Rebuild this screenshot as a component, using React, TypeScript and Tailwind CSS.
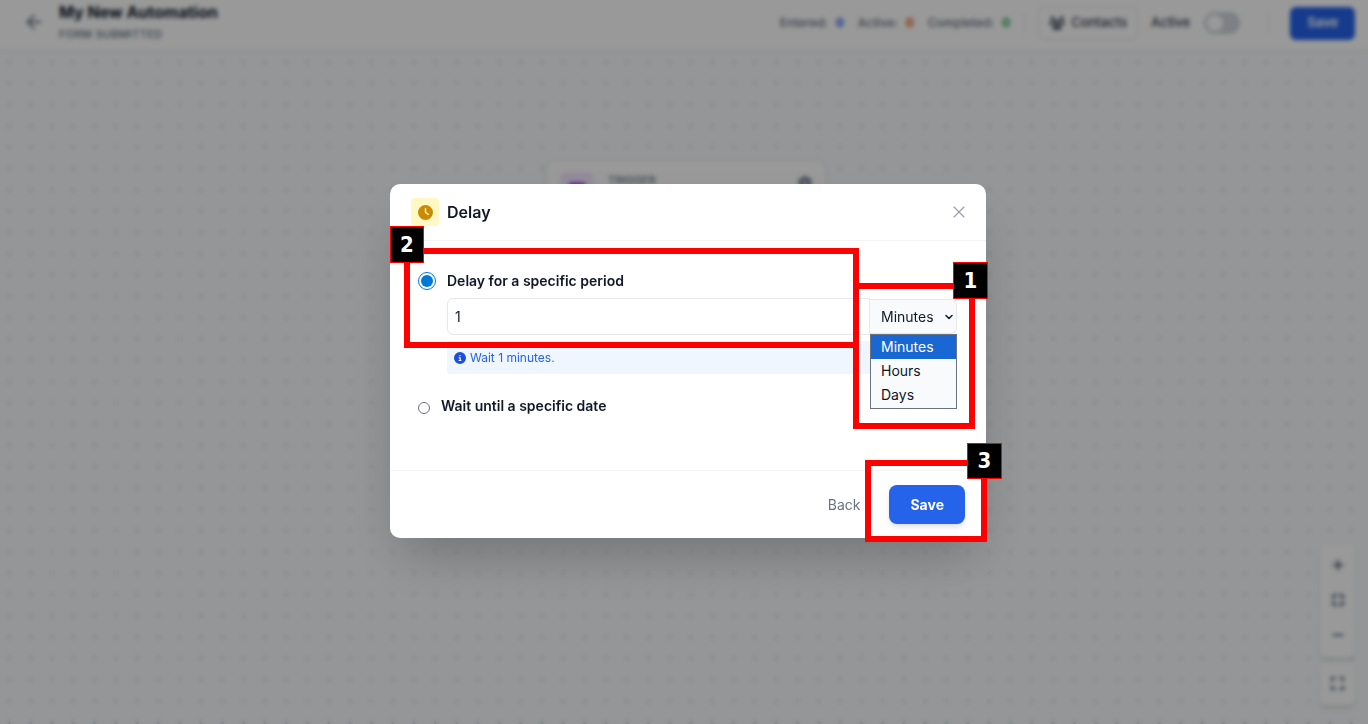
import { useState } from "react";
import type { ReactNode } from "react";
import { ArrowLeft, ChevronDown, X } from "lucide-react";
import { FaCircleInfo, FaClock, FaCompress, FaExpand, FaGear, FaMinus, FaPlus, FaRectangleList, FaUsers } from "react-icons/fa6";
import clsx from "clsx";

const UNITS = ["Minutes", "Hours", "Days"];

const STATS = [
  { label: "Entered:", value: 0, color: "text-[#2563eb]" },
  { label: "Active:", value: 0, color: "text-[#ea580c]" },
  { label: "Completed:", value: 0, color: "text-[#16a34a]" },
];

function Callout({ step, box, badge }: { step: number; box: string; badge: string }) {
  return (
    <>
      <div className={clsx("pointer-events-none absolute border-6 border-[#ff0000]", box)} />
      <span
        className={clsx(
          "pointer-events-none absolute z-10 flex items-center justify-center border border-[#ff0000] bg-black font-['DejaVu_Sans_Condensed','DejaVu_Sans',sans-serif] text-[22px] leading-8 font-bold text-white",
          badge,
        )}
      >
        {step}
      </span>
    </>
  );
}

function MapButton({ label, children }: { label: string; children: ReactNode }) {
  return (
    <button type="button" aria-label={label} className="flex h-[35px] w-[35px] items-center justify-center text-slate-600">
      {children}
    </button>
  );
}

function Header() {
  return (
    <header className="flex h-[51px] shrink-0 items-center justify-between border-b border-gray-200 bg-white pr-[13px] pl-[23px]">
      <div className="flex items-center gap-3.5 pb-1.5">
        <button type="button" aria-label="Back to automations" className="text-gray-500">
          <ArrowLeft size={22} />
        </button>
        <div>
          <h1 className="text-base leading-6 font-bold text-gray-900">My New Automation</h1>
          <p className="text-[11px] leading-5 font-medium tracking-wide text-gray-500 uppercase">Form submitted</p>
        </div>
      </div>
      <div className="flex items-center pb-1 text-[13px]">
        <dl className="flex gap-3.5 text-xs font-medium text-gray-500">
          {STATS.map((s) => (
            <div key={s.label} className="flex gap-2">
              <dt>{s.label}</dt>
              <dd className={clsx("font-bold", s.color)}>{s.value}</dd>
            </div>
          ))}
        </dl>
        <div className="mr-[13px] ml-3.5 h-5 w-px bg-gray-200" />
        <button type="button" className="flex h-[34px] items-center gap-1.5 rounded-md border border-gray-200 px-2.5 font-medium text-gray-700">
          <FaUsers size={16} />
          Contacts
        </button>
        <label className="ml-[13px] flex items-center gap-3.5 font-medium text-gray-700">
          Active
          <input
            type="checkbox"
            role="switch"
            className="h-[22px] w-9 appearance-none rounded-full bg-gray-300 p-[3px] before:block before:h-4 before:w-4 before:rounded-full before:bg-white"
          />
        </label>
        <div className="mx-[21px] ml-7 h-5 w-px bg-gray-200" />
        <button type="button" className="h-[33px] rounded-md bg-[#2563eb] px-[17px] font-semibold text-white">
          Save
        </button>
      </div>
    </header>
  );
}

function Canvas() {
  return (
    <main className="relative flex-1 bg-slate-50">
      <svg className="absolute inset-0 h-full w-full" aria-hidden="true">
        <defs>
          <pattern id="dots" x="-1.3" y="0.4" width="21.3" height="21.3" patternUnits="userSpaceOnUse">
            <circle cx="10.65" cy="10.65" r="1.4" fill="#c3cbd7" />
          </pattern>
        </defs>
        <rect width="100%" height="100%" fill="url(#dots)" />
      </svg>

      {/* Trigger node */}
      <section className="absolute top-[108px] left-[545px] flex h-20 w-[282px] items-start gap-3.5 rounded-xl border border-gray-200 bg-white px-3.5 pt-3 shadow-sm">
        <div className="flex h-[34px] w-[34px] items-center justify-center rounded-lg bg-purple-100 text-purple-600">
          <FaRectangleList size={16} />
        </div>
        <p className="flex-1 text-[11px] leading-4 font-medium text-gray-500">TRIGGER</p>
        <button type="button" aria-label="Trigger settings" className="mt-1 text-slate-500">
          <FaGear size={14} />
        </button>
      </section>

      {/* Zoom controls */}
      <div className="absolute right-[13px] bottom-[19px] flex flex-col gap-1">
        <div className="rounded-md bg-white pt-0.5 pb-1.5 shadow-md">
          <MapButton label="Zoom in"><FaPlus size={14} /></MapButton>
          <MapButton label="Fit view"><FaCompress size={16} /></MapButton>
          <MapButton label="Zoom out"><FaMinus size={14} /></MapButton>
        </div>
        <div className="rounded-md bg-white py-1 shadow-md">
          <MapButton label="Full screen"><FaExpand size={15} /></MapButton>
        </div>
      </div>
    </main>
  );
}

function DelayDialog() {
  const [mode, setMode] = useState("period");
  const [amount, setAmount] = useState("1");
  const [unit, setUnit] = useState("Minutes");

  return (
    <div role="dialog" aria-modal="true" aria-labelledby="delay-title" className="relative w-[596px] rounded-[10px] bg-white text-sm shadow-2xl">
      <div className="flex h-[57px] items-center gap-2 border-b border-gray-100 pr-[17px] pl-[21px]">
        <div className="flex h-7 w-7 items-center justify-center rounded-sm bg-[#fef9c3] text-[#ca8a04]">
          <FaClock size={15} />
        </div>
        <h2 id="delay-title" className="flex-1 text-base font-semibold text-gray-900">Delay</h2>
        <button type="button" aria-label="Close" className="text-gray-400">
          <X size={20} strokeWidth={1.4} />
        </button>
      </div>

      <div className="pt-7 pr-[29px] pb-[52px] pl-7">
        <label className="flex items-center gap-[11px] leading-6 font-semibold text-gray-900">
          <input
            type="radio"
            name="mode"
            checked={mode === "period"}
            onChange={() => setMode("period")}
            className="flex h-[18px] w-[18px] appearance-none items-center justify-center rounded-full border border-[#0078d7] before:h-3 before:w-3 before:rounded-full before:bg-[#0078d7]"
          />
          Delay for a specific period
        </label>
        <div className="mt-[5px] flex items-center pl-[29px]">
          <input
            type="text"
            aria-label="Delay amount"
            value={amount}
            onChange={(e) => setAmount(e.target.value)}
            className="h-[37px] min-w-0 flex-1 rounded-l-md border border-gray-200 px-[7px] text-gray-900"
          />
          <div className="relative w-[87px]">
            <select
              aria-label="Delay unit"
              value={unit}
              onChange={(e) => setUnit(e.target.value)}
              className="block h-[35px] w-full appearance-none rounded-r-md border border-l-0 border-gray-200 bg-gray-50 pl-[11px] text-gray-900"
            >
              {UNITS.map((u) => <option key={u}>{u}</option>)}
            </select>
            <ChevronDown size={12} strokeWidth={3} className="pointer-events-none absolute top-3 right-[2px] text-gray-900" />
            <ul role="listbox" aria-label="Units" className="absolute top-full left-0 z-10 w-full border border-gray-500 bg-gray-50 pb-px text-gray-900">
              {UNITS.map((u) => (
                <li
                  key={u}
                  role="option"
                  aria-selected={u === unit}
                  onClick={() => setUnit(u)}
                  className={clsx("h-6 pl-2.5 leading-6", u === unit && "bg-[#1967d2] text-white")}
                >
                  {u}
                </li>
              ))}
            </ul>
          </div>
        </div>
        <p className="mt-1.5 ml-[29px] flex h-[33px] items-center gap-1 rounded-sm bg-blue-50 px-[7px] text-xs text-[#2563eb]">
          <FaCircleInfo size={12} className="text-[#1d4ed8]" />
          Wait {amount} {unit.toLowerCase()}.
        </p>
        <label className="mt-5 flex items-center gap-[11px] leading-6 font-semibold text-gray-900">
          <input
            type="radio"
            name="mode"
            checked={mode === "date"}
            onChange={() => setMode("date")}
            className="mt-1 h-3 w-3 appearance-none rounded-full border border-gray-500 checked:bg-[#0078d7]"
          />
          Wait until a specific date
        </label>
      </div>

      <div className="flex h-[68px] items-center justify-end gap-[29px] border-t border-gray-100 pr-[21px]">
        <button type="button" className="text-gray-500">Back</button>
        <button type="button" className="h-[39px] rounded-lg bg-[#2563eb] px-[21px] font-bold text-white shadow-md">
          Save
        </button>
      </div>

      <Callout step={2} box="top-16 left-[14px] h-[100px] w-[455px]" badge="top-[42px] left-0 h-[37px] w-[34px]" />
      <Callout step={1} box="top-[99px] left-[463px] h-[146px] w-[122px]" badge="top-[78px] left-[563px] h-[37px] w-[35px]" />
      <Callout step={3} box="top-[276px] left-[475px] h-[82px] w-[122px]" badge="top-[259px] left-[577px] h-9 w-[35px]" />
    </div>
  );
}

export default function App() {
  return (
    <div className="flex min-h-screen flex-col font-[Inter,sans-serif]">
      <Header />
      <Canvas />
      <div className="fixed inset-0 flex items-center justify-center bg-black/40 pb-0.5 pl-2 backdrop-blur-[2px]">
        <DelayDialog />
      </div>
    </div>
  );
}
